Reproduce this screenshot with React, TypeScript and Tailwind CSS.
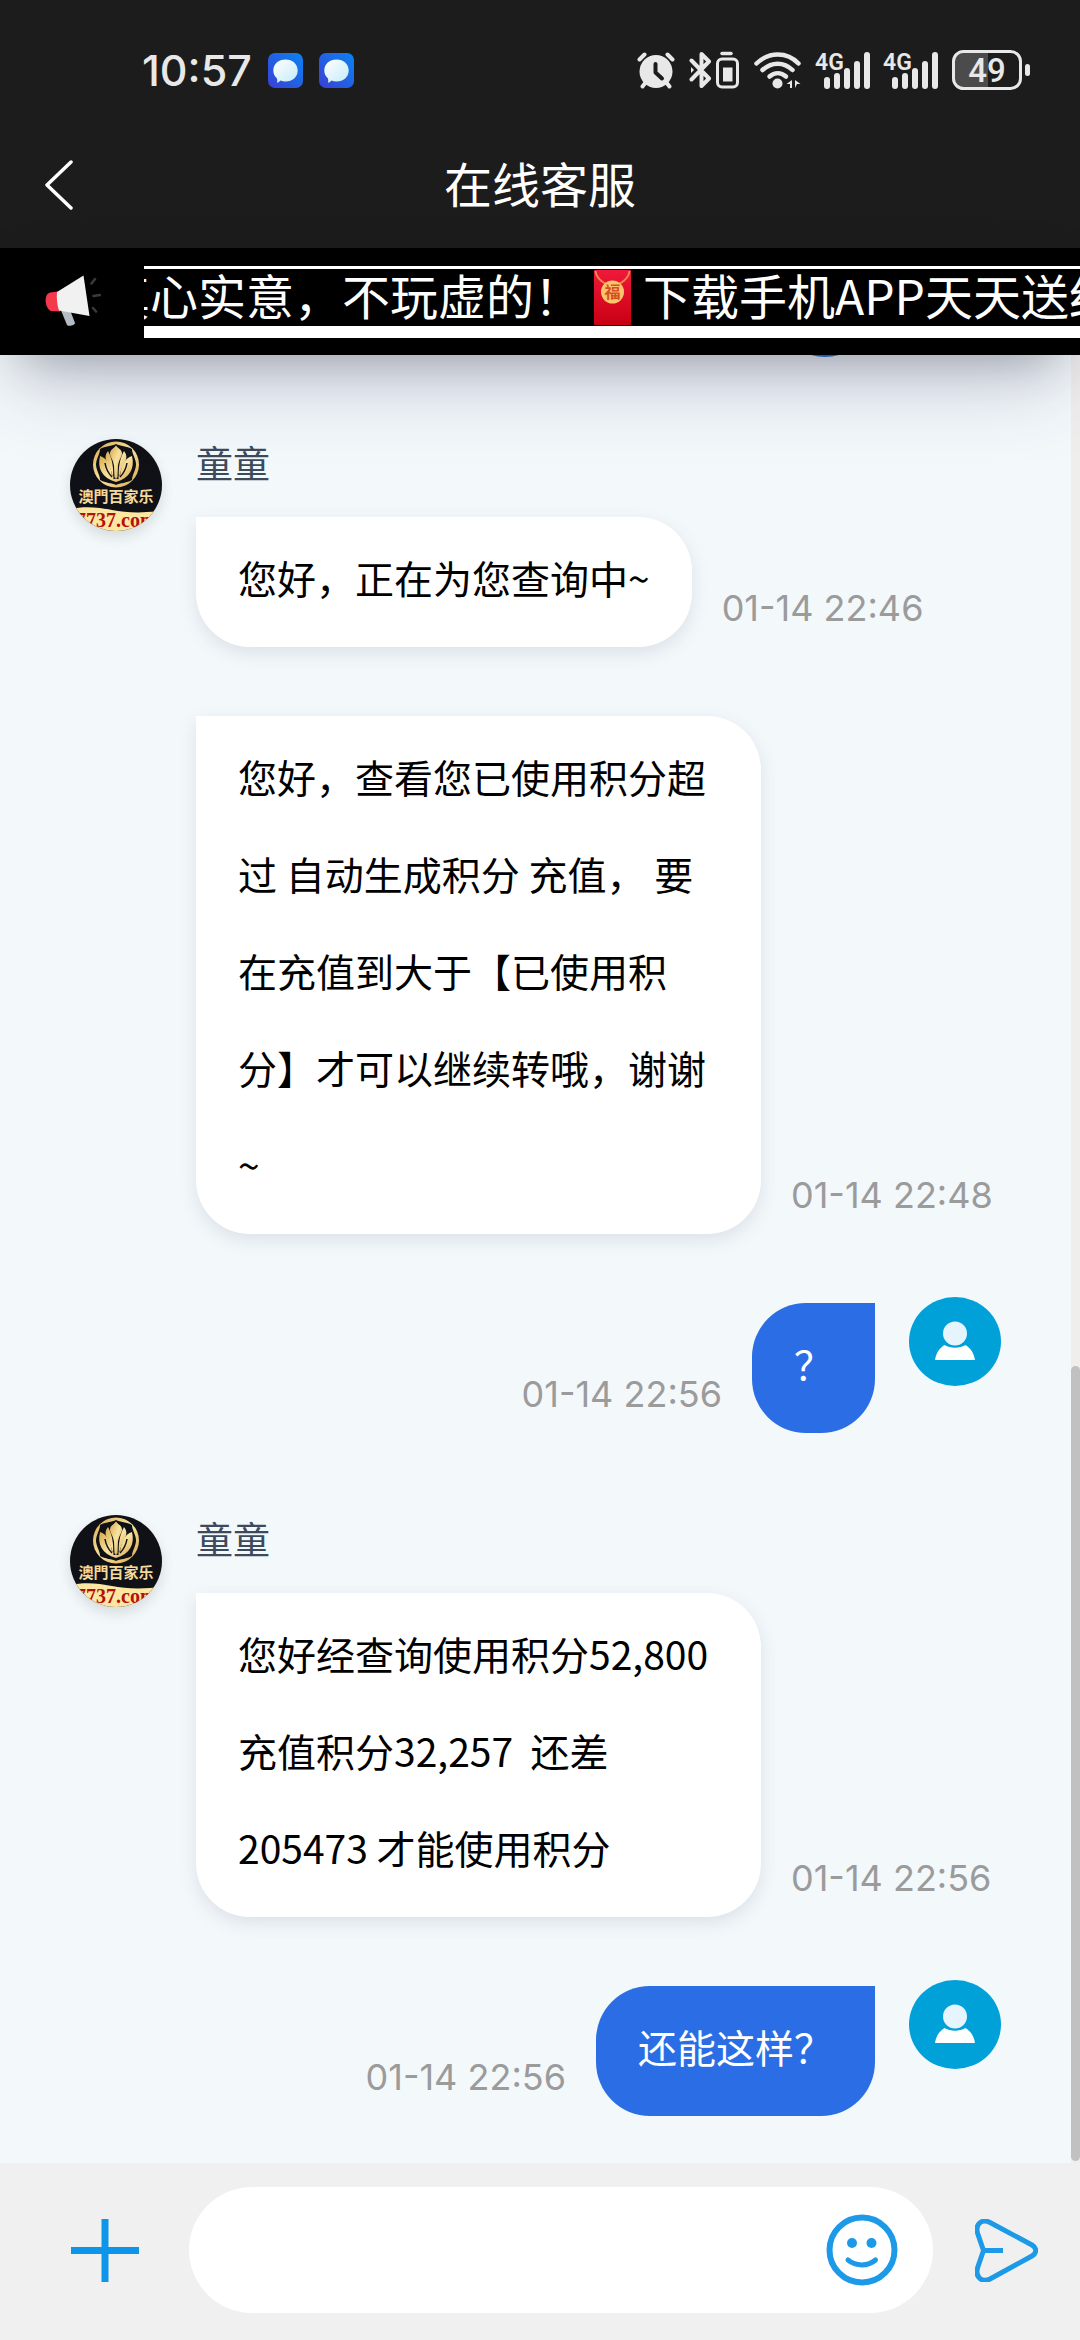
import { useState } from 'react';

type Message = {
  id: number;
  from: 'agent' | 'me';
  name?: string;
  text: string;
  time: string;
};

const messages: Message[] = [
  { id: 1, from: 'agent', name: '童童', text: '您好，正在为您查询中~', time: '01-14 22:46' },
  {
    id: 2,
    from: 'agent',
    text: '您好，查看您已使用积分超过 自动生成积分 充值， 要在充值到大于【已使用积分】才可以继续转哦，谢谢~',
    time: '01-14 22:48',
  },
  { id: 3, from: 'me', text: '？', time: '01-14 22:56' },
  {
    id: 4,
    from: 'agent',
    name: '童童',
    text: '您好经查询使用积分52,800 充值积分32,257  还差205473 才能使用积分',
    time: '01-14 22:56',
  },
  { id: 5, from: 'me', text: '还能这样？', time: '01-14 22:56' },
];

function ChatAppIcon({ id }: { id: string }) {
  return (
    <svg width="35" height="35" viewBox="0 0 35 35">
      <defs>
        <linearGradient id={id} x1="0" y1="1" x2="1" y2="0">
          <stop offset="0" stopColor="#3a3fd6" />
          <stop offset="1" stopColor="#0a84f0" />
        </linearGradient>
        <linearGradient id={`${id}-bubble`} x1="0" y1="0" x2="1" y2="1">
          <stop offset="0" stopColor="#ffffff" />
          <stop offset="1" stopColor="#c4ebf7" />
        </linearGradient>
      </defs>
      <rect width="35" height="35" rx="7" fill={`url(#${id})`} />
      <path
        d="M17.500 6.500c7 0 12.200 4.600 12.200 11s-5.200 11-12.200 11c-1.800 0-3.500-.3-5-.9-1 1.200-2.200 1.900-3.500 2.200.4-1.400.4-2.800 0-4.300C6.700 23.500 5.300 20.700 5.300 17.500c0-6.400 5.200-11 12.200-11z"
        fill={`url(#${id}-bubble)`}
      />
    </svg>
  );
}

function AlarmIcon() {
  return (
    <svg width="38" height="37" viewBox="0 0 38 37" fill="none" stroke="#e8e8e8" strokeLinecap="round">
      <path d="M2.500 7.500 7.500 2.500M35.500 7.500 30.500 2.500" strokeWidth="4" />
      <path d="M9 30 5.500 34.500M29 30l3.500 4.500" strokeWidth="4" />
      <circle cx="19" cy="19.500" r="16.500" fill="#e8e8e8" stroke="none" />
      <path d="M18.500 12v8.500l6.500 6" stroke="#1c1c1c" strokeWidth="4" strokeLinejoin="round" />
    </svg>
  );
}

function BluetoothIcon() {
  return (
    <svg width="51" height="38" viewBox="0 0 51 38" fill="none" stroke="#e8e8e8" strokeLinecap="round" strokeLinejoin="round">
      <path d="M2.500 9.500 20 27.500l-7.500 7.500V3l7.500 7.500L2.500 28.500" strokeWidth="4" />
      <path d="M2 16v6l3-3z" fill="#e8e8e8" stroke="none" />
      <path d="M33 2.500h9" strokeWidth="3.500" />
      <rect x="28.500" y="8" width="20" height="28" rx="4.500" strokeWidth="3" />
      <rect x="34" y="16.500" width="9.500" height="14" fill="#e8e8e8" stroke="none" />
    </svg>
  );
}

function WifiIcon() {
  return (
    <svg width="48" height="37" viewBox="0 0 48 37" fill="none" stroke="#e8e8e8" strokeWidth="4.500" strokeLinecap="round">
      <path d="M2.500 11.500c12.500-12 30.500-12 42 0" />
      <path d="M8.500 18c9-8.500 21.500-8.500 30 0" />
      <path d="M15.500 24.500c5-4.500 11.500-4.500 16.500 0" />
      <circle cx="23.500" cy="31.500" r="5" fill="#e8e8e8" stroke="none" />
      <path d="M38 28v8h-2v-4h-3.500zM41 36v-8l5.500 4h-3.500z" fill="#e8e8e8" stroke="none" />
    </svg>
  );
}

function SignalIcon() {
  return (
    <svg width="54" height="37" viewBox="0 0 54 37" fill="#e8e8e8" className="overflow-visible">
      <text x="-1" y="18" fontSize="23" fontWeight="600" fontFamily="Roboto, sans-serif">
        4G
      </text>
      <rect x="8" y="25" width="6" height="12" rx="3" />
      <rect x="18" y="21" width="6" height="16" rx="3" />
      <rect x="28" y="16" width="6" height="21" rx="3" />
      <rect x="38" y="9" width="6" height="28" rx="3" />
      <rect x="48" y="0" width="6" height="37" rx="3" />
    </svg>
  );
}

function BatteryIcon() {
  return (
    <svg width="78" height="40" viewBox="0 0 78 40">
      <path d="M12 2h24v36H12A10 10 0 0 1 2 28V12A10 10 0 0 1 12 2z" fill="#4b4b4b" />
      <rect x="1.500" y="1.500" width="67" height="37" rx="10" fill="none" stroke="#e8e8e8" strokeWidth="3" />
      <rect x="73" y="14" width="5" height="12" rx="2.500" fill="#e8e8e8" />
      <text x="35" y="32" textAnchor="middle" fontSize="33" fontWeight="500" fontFamily="Roboto, sans-serif" fill="#e8e8e8">
        49
      </text>
    </svg>
  );
}

function MegaphoneIcon() {
  return (
    <svg width="56" height="52" viewBox="0 0 56 52">
      <path d="M15 33l10 2 5 13c0 2-6 4-8 2z" fill="#b3bcc4" />
      <path d="M13 16.500 5 17.500c-6 1.500-6 15 1 18.500l9 .5z" fill="#f5384b" />
      <path d="M12 17 38.500.5 44.500 41 14 35.500C12 30 11.500 23 12 17z" fill="#f1f1f1" />
      <path d="M46.500 8.500 50 4M48.500 21l6.500-1M48 33l3 3.500" stroke="#3a3a3a" strokeWidth="2.500" strokeLinecap="round" />
    </svg>
  );
}

function RedEnvelope() {
  return (
    <svg width="37" height="55" viewBox="0 0 37 55" className="shrink-0">
      <defs>
        <linearGradient id="envelope" x1="0" y1="0" x2="0" y2="1">
          <stop offset="0" stopColor="#f0193a" />
          <stop offset="1" stopColor="#c80012" />
        </linearGradient>
      </defs>
      <rect width="37" height="55" rx="1" fill="url(#envelope)" />
      <path d="M1.500 1c1 8 9 14 17 14s16-6 17-14" fill="none" stroke="#f08a4b" strokeWidth="2" />
      <circle cx="18.500" cy="22" r="11.500" fill="#fbc36b" />
      <text x="18.500" y="28" textAnchor="middle" fontSize="16" fontWeight="700" fontFamily='"Noto Sans CJK SC", sans-serif' fill="#d8501f">
        福
      </text>
    </svg>
  );
}

function AgentAvatar() {
  return (
    <svg width="92" height="92" viewBox="0 0 92 92" className="rounded-full shadow-[0_6px_14px_rgba(0,0,0,0.12)]">
      <defs>
        <linearGradient id="gold" x1="0" y1="0" x2="1" y2="1">
          <stop offset="0" stopColor="#d9ab4e" />
          <stop offset="0.5" stopColor="#f8e3a0" />
          <stop offset="1" stopColor="#d9a548" />
        </linearGradient>
      </defs>
      <rect width="92" height="92" fill="#101116" />
      <circle cx="46" cy="25.500" r="23" fill="url(#gold)" />
      <path d="M46 5c4 2 11 2 16 5 0 5 4 10 4 15.500s-4 10.500-4 15.500c-5 3-12 3-16 5-4-2-11-2-16-5 0-5-4-10-4-15.500s4-10.500 4-15.500c5-3 12-3 16-5z" fill="#101116" />
      {/* lotus: outer cup, side petals, centre petal */}
      <path d="M30 17c-3 12 2 22 16 26 14-4 19-14 16-26-7 2-11 10-12 20h-8c-1-10-5-18-12-20z" fill="url(#gold)" />
      <path d="M37 14c5 5 7 13 7.500 26M55 14c-5 5-7 13-7.500 26" fill="none" stroke="#101116" strokeWidth="2" />
      <path d="M38 12c-3 4-3 7-1 11 3 5 5 10 6 17 1-11-1-21-5-28zM54 12c3 4 3 7 1 11-3 5-5 10-6 17-1-11 1-21 5-28z" fill="url(#gold)" />
      <path d="M46 6.500c2 3 6 4 6 8 0 3-3 6-4 12l-.5 12h-3L44 26.500c-1-6-4-9-4-12 0-4 4-5 6-8z" fill="url(#gold)" />
      <path d="M35 24c1 6 3 10 7 14M57 24c-1 6-3 10-7 14" fill="none" stroke="#101116" strokeWidth="1.500" />
      <text x="46" y="63" textAnchor="middle" fontSize="15" fontWeight="700" fontFamily='"Noto Sans CJK TC", "Noto Sans CJK SC", sans-serif' fill="#f3d99a">
        澳門百家乐
      </text>
      <path d="M0 70c14-3 28-2 42 1s32 3 50 1v20H0z" fill="#fbe6a2" />
      <text x="6" y="88" fontSize="20" fontWeight="700" fontFamily='"Liberation Serif", serif' fill="#b5100c">
        7737.com
      </text>
    </svg>
  );
}

function UserAvatar() {
  return (
    <svg width="92" height="89" viewBox="0 0 92 89">
      <ellipse cx="46" cy="44.500" rx="46" ry="44.500" fill="#00a0d9" />
      <circle cx="46" cy="36.500" r="12" fill="#e6f4fd" />
      <path d="M35.500 48c6.500 3.500 14.500 3.500 21 0 5 3 8.500 8 9.500 15H26c1-7 4.500-12 9.500-15z" fill="#ffffff" />
    </svg>
  );
}

function ChatRow({ message }: { message: Message }) {
  const time = <time className="pb-[13px] font-[Inter,sans-serif] text-[36px] leading-[52px] whitespace-nowrap text-[#9b9b9b]">{message.time}</time>;

  if (message.from === 'me') {
    return (
      <li className="flex justify-end gap-[34px]">
        <div className="flex items-end gap-[30px]">
          {time}
          <p className="rounded-[54px] rounded-tr-none bg-[#2b6de5] px-[42px] pt-[12px] pb-[21px] text-[39px] leading-[97px] text-white">{message.text}</p>
        </div>
        <div className="-mt-[6px]">
          <UserAvatar />
        </div>
      </li>
    );
  }

  return (
    <li className="flex gap-[34px]">
      <div className="w-[92px] shrink-0 pt-[13px]">{message.name && <AgentAvatar />}</div>
      <div>
        {message.name && <h2 className="h-[91px] pt-[9px] text-[37px] leading-[54px] text-[#3d4a5c]">{message.name}</h2>}
        <div className="flex items-end gap-[30px]">
          <p className="max-w-[565px] rounded-[54px] rounded-tl-none bg-white px-[42px] pt-[12px] pb-[21px] text-[39px] leading-[97px] whitespace-pre-wrap text-black shadow-[0_6px_18px_rgba(60,80,100,0.13)]">
            {message.text}
          </p>
          {time}
        </div>
      </div>
    </li>
  );
}

export default function App() {
  const [draft, setDraft] = useState('');

  return (
    <div lang="zh-CN" className="flex min-h-screen flex-col bg-[#f3f8fb] font-['Noto_Sans_CJK_SC',sans-serif]">
      {/* STATUS BAR */}
      <div className="flex h-[140px] items-center justify-between bg-[#1c1c1c] pr-[50px] pl-[142px]">
        <div className="flex items-center gap-[16px]">
          <span className="font-[Inter,sans-serif] text-[43px] leading-none font-medium text-[#e8e8e8]">10:57</span>
          <ChatAppIcon id="chat-a" />
          <ChatAppIcon id="chat-b" />
        </div>
        <div className="flex items-center gap-[14px]">
          <AlarmIcon />
          <BluetoothIcon />
          <WifiIcon />
          <SignalIcon />
          <SignalIcon />
          <BatteryIcon />
        </div>
      </div>

      {/* TITLE */}
      <header className="grid grid-cols-[1fr_auto_1fr] items-start bg-[#1c1c1c] px-[40px] pb-[18px]">
        <button type="button" aria-label="返回" className="flex h-[90px] w-[60px] items-center">
          <svg width="36" height="50" viewBox="0 0 36 50" fill="none" stroke="#fff" strokeWidth="3.500" strokeLinecap="round" strokeLinejoin="round">
            <path d="M31 2 7 25l24 23" />
          </svg>
        </button>
        <h1 className="text-[48px] leading-[84px] text-white">在线客服</h1>
      </header>

      {/* NOTICE */}
      <section className="relative z-10 flex bg-black pt-[18px] pb-[17px] shadow-[0_39px_81px_-15px_rgba(50,50,93,0.25),0_24px_48px_-24px_rgba(0,0,0,0.3)]">
        <div className="w-[144px] shrink-0 pt-[9px] pl-[45px]">
          <MegaphoneIcon />
        </div>
        <div className="min-w-0 flex-1 overflow-hidden border-t-[3px] border-b-[12px] border-white">
          <p className="-ml-[42px] flex h-[57px] items-start text-[48px] leading-[50px] whitespace-nowrap text-white">
            真心实意，不玩虚的！
            <span className="flex h-[57px] w-[61px] shrink-0 items-center justify-center">
              <RedEnvelope />
            </span>
            下载手机APP天天送红包
          </p>
        </div>
      </section>

      {/* MESSAGES */}
      <main className="relative flex-1 overflow-hidden pt-[71px] pr-[79px] pb-[47px] pl-[70px]">
        {/* tail of the bubble scrolled away above */}
        <div className="absolute -top-[128px] right-[205px] h-[130px] w-[100px] rounded-[50px] rounded-tr-none bg-[#2b6de5]"></div>
        <ul className="flex flex-col gap-[69px]">
          {messages.map((message) => (
            <ChatRow key={message.id} message={message} />
          ))}
        </ul>
        <div className="absolute top-0 right-0 bottom-0 flex w-[9px] flex-col justify-end bg-[#f0eeed] pb-[2px]">
          <div className="h-[44%] rounded-full bg-[#c1c1c1]"></div>
        </div>
      </main>

      {/* INPUT */}
      <form className="flex items-center bg-[#f0f0f0] pt-[24px] pr-[42px] pb-[27px] pl-[71px]" onSubmit={(e) => e.preventDefault()}>
        <button type="button" aria-label="更多" className="mr-[50px]">
          <svg width="68" height="63" viewBox="0 0 68 63" stroke="#0d96e9" strokeWidth="7">
            <path d="M0 31.500h68M34 0v63" />
          </svg>
        </button>
        <div className="mr-[42px] flex h-[126px] flex-1 items-center rounded-full bg-white pr-[35px] pl-[50px]">
          <input
            type="text"
            aria-label="消息"
            className="min-w-0 flex-1 bg-transparent text-[39px] text-black outline-none"
            value={draft}
            onChange={(e) => setDraft(e.target.value)}
          />
          <button type="button" aria-label="表情">
            <svg width="72" height="72" viewBox="0 0 72 72" fill="none" stroke="#1c9ae8" strokeWidth="5" strokeLinecap="round">
              <circle cx="36" cy="36" r="32.500" strokeWidth="6" />
              <path d="M22 46c8 6.500 20 6.500 27.500 0" />
              <circle cx="26" cy="29" r="5" fill="#1c9ae8" stroke="none" />
              <circle cx="45.500" cy="29" r="5" fill="#1c9ae8" stroke="none" />
            </svg>
          </button>
        </div>
        <button type="submit" aria-label="发送">
          <svg width="63" height="63" viewBox="0 0 63 63" fill="none" stroke="#1c9ae8" strokeWidth="5" strokeLinejoin="round">
            <path d="M15 3.500 57 26c5 3 5 8 0 11L15 60C7 64 0 58 2.500 49L8.500 31.500 2.500 14C0 5 7-.5 15 3.500zM9 31.500h19" />
          </svg>
        </button>
      </form>
    </div>
  );
}
